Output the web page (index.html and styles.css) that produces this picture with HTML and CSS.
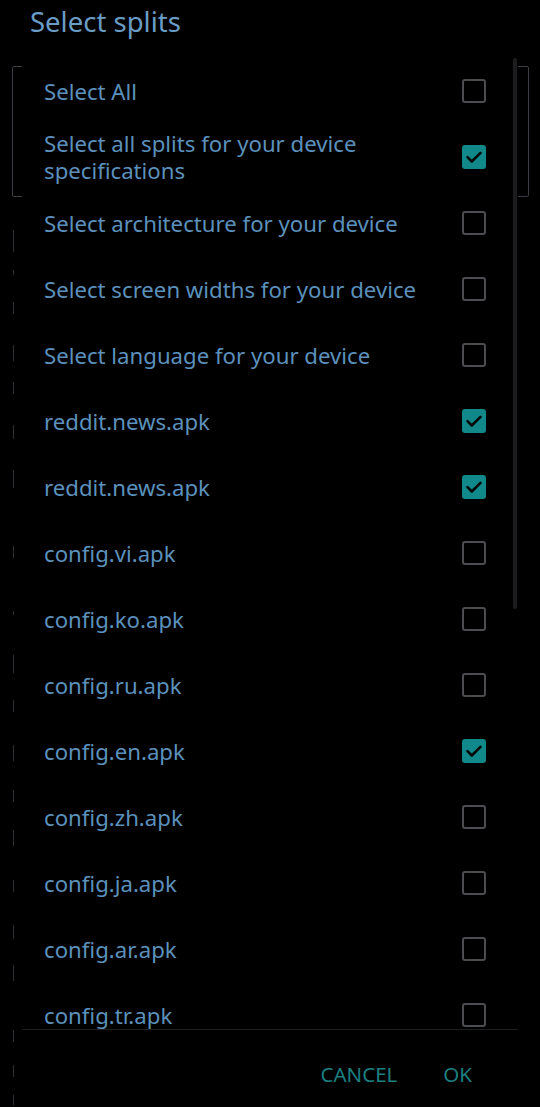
FILE: index.html
```html
<!DOCTYPE html>
<html>
<head>
<meta charset="utf-8">
<link rel="stylesheet" href="styles.css">
</head>
<body>
<div class="backdrop">
  <div class="bg-field"></div>
  <div class="bg-marks">
    <span class="mark m1"></span><span class="mark m2"></span><span class="mark m3"></span>
    <span class="mark m4"></span><span class="mark m5"></span><span class="mark m6"></span>
    <span class="mark m7"></span><span class="mark m8"></span><span class="mark m9"></span>
    <span class="mark m10"></span><span class="mark m11"></span><span class="mark m12"></span>
    <span class="mark m13"></span><span class="mark m14"></span><span class="mark m15"></span>
    <span class="mark m16"></span><span class="mark m17"></span><span class="mark m18"></span>
    <span class="mark m19"></span><span class="mark m20"></span>
  </div>
</div>
<div class="dialog">
  <h1 class="title">Select splits</h1>
  <div class="list">
    <div class="scrollbar"></div>
    <div class="row"><span class="label">Select All</span><span class="box"></span></div>
    <div class="row"><span class="label">Select all splits for your device specifications</span><span class="box checked"><svg viewBox="0 0 24 24"><path d="M5.5 12.2l4.3 4.3 8.7-8.7"/></svg></span></div>
    <div class="row"><span class="label">Select architecture for your device</span><span class="box"></span></div>
    <div class="row"><span class="label">Select screen widths for your device</span><span class="box"></span></div>
    <div class="row"><span class="label">Select language for your device</span><span class="box"></span></div>
    <div class="row"><span class="label">reddit.news.apk</span><span class="box checked"><svg viewBox="0 0 24 24"><path d="M5.5 12.2l4.3 4.3 8.7-8.7"/></svg></span></div>
    <div class="row"><span class="label">reddit.news.apk</span><span class="box checked"><svg viewBox="0 0 24 24"><path d="M5.5 12.2l4.3 4.3 8.7-8.7"/></svg></span></div>
    <div class="row"><span class="label">config.vi.apk</span><span class="box"></span></div>
    <div class="row"><span class="label">config.ko.apk</span><span class="box"></span></div>
    <div class="row"><span class="label">config.ru.apk</span><span class="box"></span></div>
    <div class="row"><span class="label">config.en.apk</span><span class="box checked"><svg viewBox="0 0 24 24"><path d="M5.5 12.2l4.3 4.3 8.7-8.7"/></svg></span></div>
    <div class="row"><span class="label">config.zh.apk</span><span class="box"></span></div>
    <div class="row"><span class="label">config.ja.apk</span><span class="box"></span></div>
    <div class="row"><span class="label">config.ar.apk</span><span class="box"></span></div>
    <div class="row"><span class="label">config.tr.apk</span><span class="box"></span></div>
  </div>
  <div class="footer">
    <button class="btn">CANCEL</button>
    <button class="btn">OK</button>
  </div>
</div>
</body>
</html>
```
FILE: styles.css
```css
html, body {
  margin: 0;
  padding: 0;
  background: #000;
}
body {
  width: 540px;
  height: 1107px;
  overflow: hidden;
  position: relative;
  font-family: "Noto Sans", "DejaVu Sans", sans-serif;
}
.backdrop {
  position: absolute;
  inset: 0;
  z-index: 0;
}
.bg-field {
  position: absolute;
  left: 12px;
  top: 66px;
  width: 515px;
  height: 129px;
  border: 1px solid #3a3d42;
  border-radius: 2px;
}
.mark {
  position: absolute;
  left: 13px;
  width: 1px;
  height: 12px;
  background: #2c2f33;
}
.m1 { top: 230px; height: 22px; }
.m2 { top: 270px; height: 5px; }
.m3 { top: 302px; }
.m4 { top: 345px; height: 16px; }
.m5 { top: 382px; }
.m6 { top: 425px; height: 14px; }
.m7 { top: 470px; height: 18px; }
.m8 { top: 546px; }
.m9 { top: 611px; height: 4px; }
.m10 { top: 655px; height: 18px; }
.m11 { top: 700px; }
.m12 { top: 745px; height: 16px; }
.m13 { top: 790px; }
.m14 { top: 830px; height: 16px; }
.m15 { top: 880px; }
.m16 { top: 925px; height: 14px; }
.m17 { top: 965px; height: 16px; }
.m18 { top: 1030px; }
.m19 { top: 1065px; }
.m20 { top: 1095px; height: 10px; }

.dialog {
  position: relative;
  z-index: 1;
  margin: 0 22px;
  height: 1107px;
  background: #000;
  display: flex;
  flex-direction: column;
}
.title {
  margin: 0;
  padding: 4px 0 0 8px;
  height: 58px;
  flex: none;
  box-sizing: border-box;
  font-weight: 400;
  font-size: 27.5px;
  line-height: 36px;
  color: #6a9dc6;
}
.list {
  position: relative;
  height: 971px;
  overflow: hidden;
  display: flex;
  flex-direction: column;
  flex: none;
}
.scrollbar {
  position: absolute;
  right: 1px;
  top: 0;
  width: 4px;
  height: 551px;
  background: #1c1c1e;
  border-radius: 2px;
}
.row {
  flex: none;
  min-height: 66px;
  display: flex;
  align-items: center;
  gap: 20px;
  padding: 0 32px 0 22px;
}
.label {
  flex: 1;
  font-size: 22.2px;
  line-height: 27px;
  color: #5b91bc;
}
.box {
  flex: none;
  width: 24px;
  height: 24px;
  box-sizing: border-box;
  border: 2px solid #4b4d50;
  border-radius: 3px;
}
.box.checked {
  border: none;
  background: #11898a;
}
.box svg {
  display: block;
  width: 24px;
  height: 24px;
}
.box path {
  fill: none;
  stroke: #050808;
  stroke-width: 2.6;
  stroke-linecap: round;
  stroke-linejoin: round;
}
.footer {
  flex: 1;
  border-top: 1px solid #1e1f21;
  display: flex;
  justify-content: flex-end;
  align-items: center;
  gap: 46px;
  padding: 10px 46px 0 0;
}
.btn {
  background: none;
  border: none;
  padding: 0;
  font-family: inherit;
  font-size: 20.5px;
  color: #1c7f80;
}
```
